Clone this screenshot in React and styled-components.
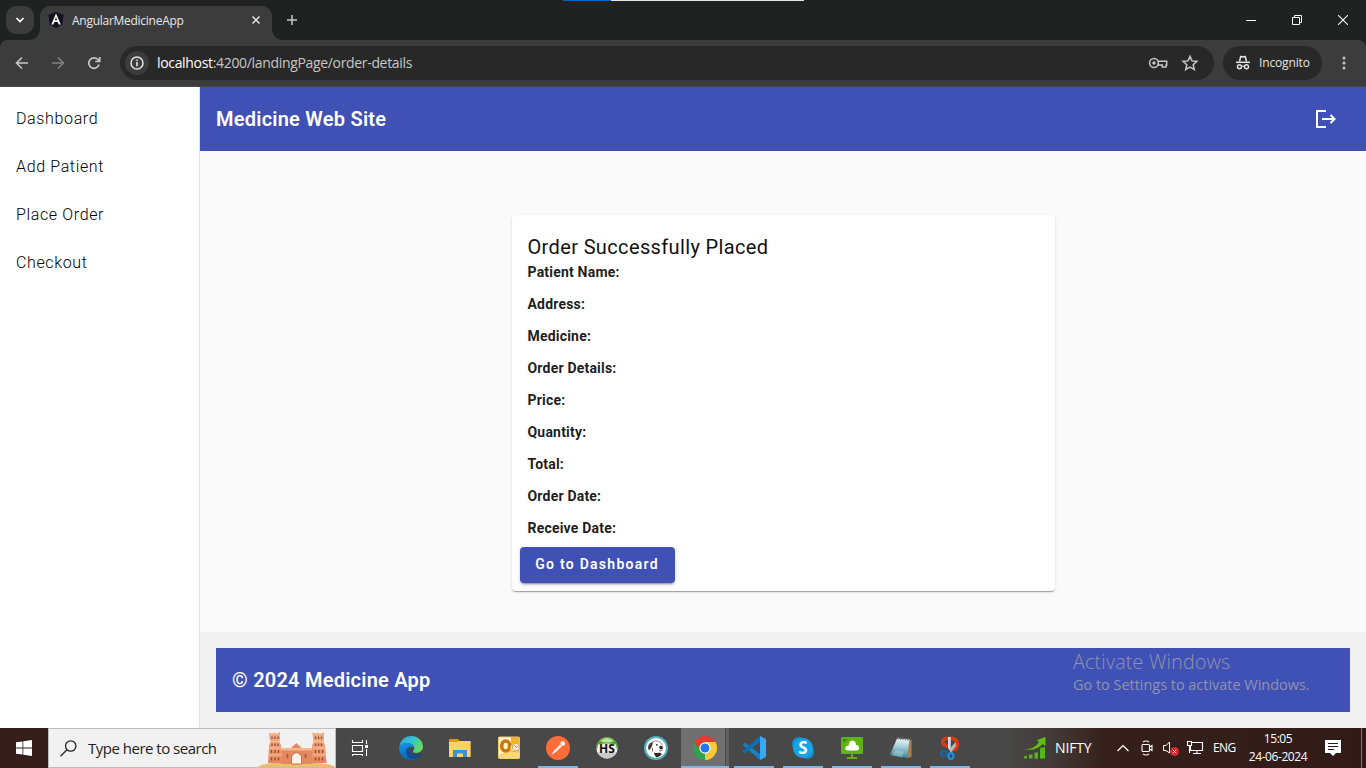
import React from 'react';
import styled, { createGlobalStyle } from 'styled-components';

const Global = createGlobalStyle`
  * { box-sizing: border-box; }
  body { margin: 0; overflow: hidden; background: #fafafa; }
  svg { display: block; flex: none; }
`;

const segoe = `'Open Sans', 'Noto Sans', sans-serif`;

const Screen = styled.div`
  position: relative;
  width: 1366px;
  height: 768px;
  display: flex;
  flex-direction: column;
  overflow: hidden;
  font-family: Roboto, sans-serif;
`;

/* ---------- browser chrome ---------- */
const TabStrip = styled.div`
  height: 40px;
  flex: none;
  display: flex;
  background: #1f2221;
  color: #fff;
  font-family: ${segoe};
`;
const TabSearch = styled.div`
  width: 28px;
  height: 28px;
  margin: 6px 6px 0;
  border-radius: 10px;
  background: #3c3c3c;
  display: flex;
  align-items: center;
  justify-content: center;
`;
const Tab = styled.div`
  position: relative;
  width: 232px;
  height: 34px;
  margin-top: 6px;
  padding: 0 10px 6px 8px;
  border-radius: 10px 10px 0 0;
  background: #3c3c3c;
  display: flex;
  align-items: center;
  &::before, &::after {
    content: '';
    position: absolute;
    bottom: 0;
    width: 10px;
    height: 10px;
  }
  &::before { left: -10px; background: radial-gradient(circle at 0 0, transparent 9.5px, #3c3c3c 10px); }
  &::after { right: -10px; background: radial-gradient(circle at 100% 0, transparent 9.5px, #3c3c3c 10px); }
`;
const TabTitle = styled.span`
  flex: 1;
  margin-left: 8px;
  padding-top: 1px;
  font-size: 12px;
  line-height: 16px;
  letter-spacing: -0.27px;
  color: #e6e6e6;
`;
const NewTab = styled.div`
  width: 40px;
  display: flex;
  align-items: center;
  justify-content: center;
`;
const WindowControls = styled.div`
  margin-left: auto;
  display: flex;
  align-items: center;
`;
const WindowButton = styled.div`
  width: 46px;
  height: 40px;
  display: flex;
  align-items: center;
  justify-content: center;
`;
const LoadingEdge = styled.div`
  position: absolute;
  top: 0;
  left: 563px;
  width: 241px;
  height: 1px;
  background: linear-gradient(90deg, #0067c0 48px, #e4e4e4 48px);
`;
const AddressBar = styled.div`
  height: 47px;
  flex: none;
  display: flex;
  align-items: center;
  padding: 0 10px 1px 10px;
  background: #3c3c3c;
  border-bottom: 1px solid #4a4a4a;
  border-radius: 8px 8px 0 0;
  color: #c7c7c7;
  font-family: ${segoe};
`;
const BarBack = styled.div`
  flex: none;
  background: #1f2221;
`;
const NavButton = styled.div`
  width: 24px;
  margin-right: 12px;
  display: flex;
  justify-content: center;
  opacity: ${(p) => (p.$dim ? 0.5 : 1)};
`;
const Omnibox = styled.div`
  width: 1094px;
  height: 34px;
  margin-left: 2px;
  padding: 0 14px 0 5px;
  border-radius: 17px;
  background: #282828;
  display: flex;
  align-items: center;
`;
const InfoBadge = styled.div`
  width: 24px;
  height: 24px;
  border-radius: 50%;
  background: #3c3c3c;
  display: flex;
  align-items: center;
  justify-content: center;
`;
const Url = styled.span`
  flex: 1;
  margin-left: 8px;
  padding-top: 1px;
  font-size: 14px;
  line-height: 20px;
  letter-spacing: -0.33px;
  color: #c7c7c7;
  b { font-weight: 400; color: #fff; }
`;
const OmniIcons = styled.div`
  display: flex;
  align-items: center;
  gap: 12px;
`;
const Incognito = styled.div`
  width: 99px;
  height: 34px;
  margin-left: 9px;
  padding-left: 12px;
  border-radius: 17px;
  background: #282828;
  display: flex;
  align-items: center;
  gap: 8px;
  font-size: 12px;
  letter-spacing: -0.15px;
  color: #e3e3e3;
`;
const MenuDots = styled.div`
  width: 24px;
  margin-left: 10px;
  display: flex;
  justify-content: center;
`;

/* ---------- page ---------- */
const Page = styled.div`
  flex: 1;
  min-height: 0;
  display: flex;
  background: #fafafa;
`;
const Sidebar = styled.nav`
  width: 200px;
  padding-top: 8px;
  background: #fff;
  border-right: 1px solid #e0e0e0;
`;
const SideLink = styled.div`
  height: 48px;
  padding-left: 16px;
  line-height: 48px;
  font-size: 16px;
  font-weight: 300;
  letter-spacing: 0.64px;
  color: #000;
`;
const Main = styled.main`
  flex: 1;
  display: flex;
  flex-direction: column;
`;
const Toolbar = styled.div`
  height: 64px;
  flex: none;
  padding: 0 28px 0 16px;
  display: flex;
  align-items: center;
  justify-content: space-between;
  background: #3f51b5;
  color: #fff;
  font-size: 20px;
  font-weight: 600;
  letter-spacing: 0.23px;
`;
const Content = styled.section`
  flex: 1;
  padding-top: 64px;
`;
const Card = styled.div`
  width: 543px;
  height: 376px;
  margin-left: 312px;
  border-radius: 4px;
  background: #fff;
  box-shadow: 0 2px 1px -1px rgba(0, 0, 0, 0.2), 0 1px 1px rgba(0, 0, 0, 0.14), 0 1px 3px rgba(0, 0, 0, 0.12);
  color: rgba(0, 0, 0, 0.9);
`;
const CardTitle = styled.h3`
  margin: 0;
  padding: 16px 15.5px 0;
  font-size: 20px;
  line-height: 32px;
  font-weight: 400;
  letter-spacing: 0.36px;
  color: #111;
`;
const Field = styled.p`
  margin: 0 0 12px;
  padding-left: 15.5px;
  font-size: 14px;
  line-height: 20px;
  font-weight: 700;
  letter-spacing: 0.2px;
  &:first-of-type { margin-top: -1px; }
  &:last-of-type { margin-bottom: 9px; }
`;
const PrimaryButton = styled.button`
  display: block;
  width: 155px;
  height: 36px;
  margin-left: 8px;
  padding: 0 1px 2px 0;
  border: 0;
  border-radius: 4px;
  background: #3f51b5;
  color: #fff;
  font: 600 14px Roboto, sans-serif;
  letter-spacing: 1.27px;
  box-shadow: 0 3px 1px -2px rgba(0, 0, 0, 0.2), 0 2px 2px rgba(0, 0, 0, 0.14), 0 1px 5px rgba(0, 0, 0, 0.12);
`;
const Footer = styled.footer`
  height: 96px;
  padding: 16px;
  background: #f0f0f0;
`;
const Watermark = styled.div`
  position: absolute;
  left: 1073px;
  top: 649px;
  font-family: ${segoe};
  color: #8f94ae;
  white-space: nowrap;
`;
const WatermarkTitle = styled.div`
  font-size: 19.5px;
  line-height: 26px;
  font-weight: 300;
  letter-spacing: 0.27px;
`;
const WatermarkText = styled.div`
  font-size: 14.5px;
  line-height: 20px;
  letter-spacing: -0.03px;
`;

/* ---------- taskbar ---------- */
const Taskbar = styled.div`
  height: 40px;
  flex: none;
  display: flex;
  background: linear-gradient(90deg, #351e19 0 48px, #484848 48px, #484848 1000px, #433b39 1050px, #35201b 1105px, #311b17 1366px);
  color: #fff;
  font-family: ${segoe};
`;
const Start = styled.div`
  width: 48px;
  display: flex;
  align-items: center;
  justify-content: center;
`;
const SearchBox = styled.div`
  width: 288px;
  border: 1px solid #bdbdbd;
  background: #f1f1f1;
  padding-left: 11px;
  display: flex;
  align-items: center;
`;
const SearchText = styled.span`
  flex: 1;
  margin-left: 11px;
  font-size: 15px;
  letter-spacing: -0.5px;
  color: #222;
  white-space: nowrap;
`;
const TaskView = styled.div`
  width: 51px;
  padding-right: 3px;
  display: flex;
  align-items: center;
  justify-content: center;
`;
const AppSlot = styled.div`
  position: relative;
  width: 49px;
  padding-right: 1px;
  display: flex;
  align-items: center;
  justify-content: center;
  &::before {
    content: '';
    position: absolute;
    top: 0;
    bottom: 0;
    left: 0;
    width: 48px;
    display: ${(p) => (p.$active ? 'block' : 'none')};
    background: linear-gradient(90deg, #707070 44px, #484848 44px, #484848 45px, #606060 45px);
  }
  &::after {
    content: '';
    position: absolute;
    bottom: 0;
    left: ${(p) => (p.$active ? 0 : 4)}px;
    width: ${(p) => (p.$active ? 48 : 40)}px;
    height: 2px;
    display: ${(p) => (p.$open ? 'block' : 'none')};
    background: #76b9ed;
  }
  svg { position: relative; }
`;
const Tray = styled.div`
  margin-left: auto;
  width: 343px;
  display: flex;
  align-items: center;
`;
const TickerText = styled.span`
  width: 56px;
  margin-left: 8px;
  font-size: 14px;
  line-height: 18px;
  padding-bottom: 1px;
  letter-spacing: -0.15px;
`;
const TrayIcon = styled.div`
  width: 24px;
  display: flex;
  justify-content: center;
`;
const Language = styled.span`
  width: 36px;
  margin-left: 6px;
  padding-bottom: 1px;
  font-size: 12px;
  letter-spacing: -0.55px;
`;
const Clock = styled.div`
  width: 60px;
  margin: 0 17px 0 -1px;
  text-align: center;
  font-size: 12px;
  line-height: 18px;
  letter-spacing: -0.43px;
  white-space: nowrap;
`;
const ShowDesktop = styled.div`
  width: 5px;
  height: 40px;
  margin-left: auto;
  border-left: 1px solid #81736f;
`;

const Svg = ({ w = 24, h = w, vb, children, ...rest }) => (
  <svg width={w} height={h} viewBox={vb || `0 0 ${w} ${h}`} fill="none" {...rest}>{children}</svg>
);

const AngularIcon = () => (
  <Svg w={16} h={16}>
    <path d="M8 0l7.5 2.700-1.100 10L8 16l-6.400-3.300L.5 2.700z" fill="#10131d" />
    <path d="M8 1.500L3.300 12.500h2.100l.9-2.400h3.500l.9 2.400h2.100zm0 4l1.200 2.800H6.800z" fill="#fff" />
  </Svg>
);
const KeyIcon = () => (
  <Svg w={20} h={20} stroke="#c7c7c7" strokeWidth="1.500">
    <path d="M9.500 8.300h9.200v3.600h-.7v2.200h-3.700v-2.200H9.500" />
    <circle cx="6" cy="10" r="4.400" /><circle cx="6" cy="10" r="1.700" fill="#c7c7c7" stroke="none" />
  </Svg>
);
const IncognitoIcon = () => (
  <Svg w={16} h={16}>
    <path d="M4.500 6.500L5.600 2q.2-.7.900-.5L8 2l1.500-.5q.7-.2.900.5l1.100 4.500" stroke="#e3e3e3" strokeWidth="1.500" />
    <path d="M1 7.300h14" stroke="#e3e3e3" strokeWidth="1.500" />
    <circle cx="4.500" cy="11.700" r="2" stroke="#e3e3e3" strokeWidth="1.400" />
    <circle cx="11.500" cy="11.700" r="2" stroke="#e3e3e3" strokeWidth="1.400" />
    <path d="M6.500 11.500q1.500-1 3 0" stroke="#e3e3e3" strokeWidth="1.200" />
  </Svg>
);

const Fort = () => (
  <Svg w={77} h={38}>
    <defs>
      <linearGradient id="stone" x1="0" y1="0" x2="0" y2="38" gradientUnits="userSpaceOnUse">
        <stop stopColor="#f5b181" /><stop offset=".6" stopColor="#ee9a70" /><stop offset="1" stopColor="#df7f59" />
      </linearGradient>
    </defs>
    <path d="M0 38q3-3 14-4h46q14 1 17 4z" fill="#edbd6c" />
    <path d="M23 20h31v15H23z" fill="#e48861" />
    <path d="M23 19h31v2.500H23z" fill="#f6b788" />
    <path d="M33 19l2-2 3.500-3 3 3 2.500 2z" fill="#e58a5e" />
    <path d="M11 3.500l2 1h2.500V3l2 1.500h2l2.500-1.500v7l-.5 3 1.500 3 1 18H10l1-18 1.500-3-1-3z" fill="url(#stone)" />
    <path d="M54.500 3l2.500 1.500h2V3l2 1.500h2.500L66 3v7l-.5 3 1.500 3 1.500 18H54v-18l1.500-3-.5-3z" fill="url(#stone)" />
    <path d="M12 12.500h10M11 19h12.500M11 26h13M55.500 12.500h10M54.500 19h13M54.500 26h13.500" stroke="#fac79c" strokeWidth=".8" />
    <path d="M14 7.500v2.500M17 7.500v2.500M20 7.500v2.500M14 14.500v2.500M17 14.500v2.500M20 14.500v2.500M57.500 7.500v2.500M60.500 7.500v2.500M63.500 7.500v2.500M57.500 14.500v2.500M60.500 14.500v2.500M63.500 14.500v2.500" stroke="#8a4a40" strokeWidth="1.300" />
    <path d="M13.500 21v3M17 21v3M20.500 21v3M13.500 28.500v3M17 28.500v3M20.500 28.500v3M57.500 21v3M61 21v3M64.500 21v3M57.500 28.500v3M61 28.500v3M64.500 28.500v3" stroke="#94483d" strokeWidth="1.400" />
    <path d="M33.500 35v-6q0-4 5-5.500 5 1.500 5 5.500v6z" fill="#fff3e2" stroke="#c77352" />
    <path d="M29.500 25v4M47.500 25v4" stroke="#a9553f" strokeWidth="1.600" />
  </Svg>
);
const TaskViewIcon = () => (
  <Svg w={18} h={18} stroke="#fff">
    <path d="M1.500 1v3M11.500 1v3M1 3.500h11M1.500 6.500h10v6h-10zM1 15.500h11M1.500 15v2M11.500 15v2M15.500 1v4M15.500 10v7" strokeWidth="1.100" />
    <path d="M14 6h3v3h-3z" fill="#fff" stroke="none" />
  </Svg>
);
const EdgeIcon = () => (
  <Svg w={24} h={24}>
    <defs>
      <linearGradient id="eg" x1="0" y1="0" x2="24" y2="12" gradientUnits="userSpaceOnUse">
        <stop stopColor="#2aa5e0" /><stop offset=".5" stopColor="#35c1d0" /><stop offset="1" stopColor="#6be04a" />
      </linearGradient>
      <linearGradient id="eb" x1="0" y1="6" x2="6" y2="24" gradientUnits="userSpaceOnUse">
        <stop stopColor="#1a9be0" /><stop offset="1" stopColor="#0a62b8" />
      </linearGradient>
    </defs>
    <path d="M.3 11C1 4.500 6 0 12.200 0 19 0 24 5 24 10.600c0 3.900-3 6.300-6.300 6.300-2.800 0-4.200-1-3.600-2 1-1.200 1.200-2 1-3.300C14.600 8.700 12 7 9 7 5 7 1.500 8.400.3 11z" fill="url(#eg)" />
    <path d="M.3 11C1.500 8.500 5 7 8.500 7c3.700 0 6.700 2 6.600 5-1.300-2.300-5.800-1.600-6.600 2-.9 4.500 3.300 9.800 9 8.500-1.700 1-3.600 1.500-5.500 1.500C5 24-.6 18 .3 11z" fill="url(#eb)" />
    <path d="M9.500 11.500c-2.500 1.200-3 4.500-1.500 7.400 1.700 3.300 5.800 5.300 9.700 3.600 2-.9 4-2.800 4.800-4.500.1-.5-.3-.6-.8-.3-5.500 2.500-12.800.300-12.200-6.200z" fill="#0e4b91" />
  </Svg>
);
const ExplorerIcon = () => (
  <Svg w={24} h={24}>
    <path d="M1 3h9l1.500 2H22.500V21H1z" fill="#dd9b10" />
    <path d="M1 6h8l2-1h11.500v16H1z" fill="#fcd462" />
    <path d="M5 21V14h14v7h-4v-3.500H9V21z" fill="#3a91d8" />
  </Svg>
);
const Letters = styled.text`
  font: 700 ${(p) => p.$size}px 'Open Sans', sans-serif;
  text-anchor: middle;
`;
const OutlookIcon = () => (
  <Svg w={24} h={24}>
    <rect x="1.500" y="1" width="21" height="21.500" rx="1" fill="#fdf3d6" stroke="#f5cf62" />
    <path d="M14 1h8.500v8H14z" fill="#efb32c" /><path d="M2 19q9-6 20.500-3v6.500H2z" fill="#f9d676" />
    <ellipse cx="8.700" cy="10" rx="4" ry="5" stroke="#cf7608" strokeWidth="3.600" />
    <path d="M13.500 10l8-2v8l-8-1z" fill="#fbe4a2" stroke="#dba233" strokeWidth=".7" />
    <circle cx="19" cy="11" r="3.700" fill="#fff4e4" stroke="#e09443" strokeWidth=".8" /><path d="M17.500 9.500l2 2 2-1.500" stroke="#c37717" />
  </Svg>
);
const PostmanIcon = () => (
  <Svg w={24} h={24}>
    <circle cx="12" cy="12" r="12" fill="#ff6c37" />
    <path d="M5.500 18.500l2.500-4 6-6 1.800 2-6 5.500z" fill="#fff" /><path d="M8.500 15l5.500-5.500" stroke="#ff9c78" strokeWidth=".7" />
    <circle cx="16.700" cy="7.500" r="2.300" fill="#fff" />
  </Svg>
);
const HsIcon = () => (
  <Svg w={24} h={24}>
    <circle cx="12" cy="12" r="10.700" fill="#c9cbc8" /><path d="M1.300 12a10.700 10.700 0 0 1 21.400 0q-10 2-21.400 0z" fill="#4fa524" />
    <path d="M5 5q7-6 14 0-7 3-14 0z" fill="#b9e59a" /><path d="M3 8.500q9-2 18 0l1 7.500q-10 2-20 0z" fill="#eef3ea" />
    <Letters $size={12} x="12" y="16.500" fill="#111">HS</Letters>
  </Svg>
);
const BeaverIcon = () => (
  <Svg w={24} h={24}>
    <circle cx="12" cy="12" r="11" fill="#fff" stroke="#4fb3bf" strokeWidth="2" />
    <path d="M4 12q0-4 3-5.500l2-.5q-.5 3-1.700 5.500L5 14.500z" fill="#4a3832" />
    <path d="M8 6q3-2 7-.5 3 1.500 3.500 4" stroke="#8f817b" strokeWidth=".9" />
    <path d="M15.500 10q1.800-.6 3.200.6v2.300l-1.900.5-1.500-1.200z" fill="#33221d" />
    <path d="M15 14.500q2 1 3.500-.5M8.500 12v3.500" stroke="#6b5a54" strokeWidth=".9" />
    <path d="M10 16.500q3 1 5.500 0l2.500 1.500q-2 3-5.500 3.400-2.500-1.800-2.500-4.900z" fill="#33221d" />
    <circle cx="12.800" cy="8.800" r=".9" fill="#33221d" />
  </Svg>
);
const ChromeIcon = () => (
  <Svg w={24} h={24}>
    <path d="M12 12L1.600 6A12 12 0 0 1 22.400 6z" fill="#e33b2e" />
    <path d="M12 12V6h10.400A12 12 0 0 1 12 24z" fill="#fcc934" />
    <path d="M1.600 6A12 12 0 0 0 12 24l5.200-9L12 12z" fill="#30a150" />
    <path d="M1.600 6l5.200 9L12 12V6z" fill="#30a150" /><path d="M1.600 6h20.800H12l-5.200 3-1.500 3.500z" fill="#e33b2e" />
    <path d="M12 24l5.200-9L12 12z" fill="#fcc934" />
    <circle cx="12" cy="12" r="5.700" fill="#fff" /><circle cx="12" cy="12" r="4.500" fill="#2477e8" />
  </Svg>
);
const CodeIcon = () => (
  <Svg w={24} h={24}>
    <path d="M2.500 6.500L18 18v6L.5 8.500z" fill="#1583cb" />
    <path d="M2.500 17.500L.5 15.500 18 0v6z" fill="#0d70b5" />
    <path d="M18 0l6 3v18l-6 3z" fill="#37a8f2" />
  </Svg>
);
const SkypeIcon = () => (
  <Svg w={24} h={24}>
    <circle cx="8" cy="8" r="7" fill="#1191d5" /><circle cx="16" cy="16" r="7" fill="#148ed0" /><circle cx="12" cy="12" r="10" fill="#15a5e5" />
    <Letters $size={17} x="12" y="18" fill="#fff">S</Letters>
  </Svg>
);
const CloudPcIcon = () => (
  <Svg w={24} h={24}>
    <rect x="1" y="1" width="22" height="17" rx="1" fill="#5eb510" />
    <path d="M11 18h2v3h4v2H7v-2h4z" fill="#66a92b" /><path d="M3 3h5L3 7z" fill="#3f8b13" />
    <path d="M7 14.500q-3-1-1-4 1-1 2.500-.8Q9 5 12.500 4.500 16 5 16 9q3 0 3 3t-3 2.500z" fill="#fff" />
  </Svg>
);
const NotepadIcon = () => (
  <Svg w={24} h={24}>
    <defs>
      <linearGradient id="np" x1="10" y1="2" x2="8" y2="22" gradientUnits="userSpaceOnUse">
        <stop stopColor="#edf5f5" /><stop offset=".4" stopColor="#a9d1da" /><stop offset="1" stopColor="#287f94" />
      </linearGradient>
    </defs>
    <path d="M19 3l3.500 1v17L18 22z" fill="#a9834f" />
    <path d="M8 2.500L20.500 3.500 18 22 1 18.500z" fill="url(#np)" />
    <path d="M7 14l8 1.500-2 6-10-2z" fill="#d5eef2" opacity=".35" />
    <path d="M9 1v2.500m2.500-2V4m2.500-2.500V4m2.500-2v2.500m2.500-2v2.500" stroke="#777d7e" />
  </Svg>
);
const SnipIcon = () => (
  <Svg w={24} h={24}>
    <path d="M10 2.500Q4.500 2 4.500 5.500 5 9 10 10.500M11 2q8.500 0 8.500 6.500-.5 5-5.500 5.500" stroke="#d83c12" strokeWidth="3.500" />
    <path d="M10 1h2.800v15L10 12z" fill="#d6d9db" /><path d="M17.500 6l.5 4-5.500 7-1-4z" fill="#b5babd" />
    <ellipse cx="6" cy="17.500" rx="3" ry="2.300" stroke="#1266b3" strokeWidth="2" /><ellipse cx="13" cy="20" rx="2.500" ry="3" stroke="#1994e2" strokeWidth="2" />
  </Svg>
);
const TickerIcon = () => (
  <Svg w={24} h={24}>
    <path d="M1 22.500v-2l3-1v3zM6 22.500v-4h3.500v4zM11.500 22.500v-6H15v6zM17 22.500V12l5-1v11.500z" fill="#52b717" />
    <path d="M1 13q10 1 15-7l-2-2 8.500-3v9l-3-2Q12 16 1 13z" fill="#5fc010" />
  </Svg>
);

const fields = ['Patient Name:', 'Address:', 'Medicine:', 'Order Details:', 'Price:', 'Quantity:', 'Total:', 'Order Date:', 'Receive Date:'];
const apps = [
  [EdgeIcon], [ExplorerIcon], [OutlookIcon], [PostmanIcon, true], [HsIcon], [BeaverIcon],
  [ChromeIcon, true, true], [CodeIcon, true], [SkypeIcon, true], [CloudPcIcon, true], [NotepadIcon, true], [SnipIcon, true],
];

export default function App() {
  return (
    <Screen>
      <Global />
      <TabStrip>
        <TabSearch><Svg w={10} h={10} stroke="#fff" strokeWidth="1.700"><path d="M1.500 3L5 6.500 8.500 3" /></Svg></TabSearch>
        <Tab>
          <AngularIcon />
          <TabTitle>AngularMedicineApp</TabTitle>
          <Svg w={12} h={12} stroke="#e3e3e3" strokeWidth="1.500"><path d="M2.500 2.500l7 7M9.500 2.500l-7 7" /></Svg>
        </Tab>
        <NewTab><Svg w={12} h={12} stroke="#c7c7c7" strokeWidth="1.500"><path d="M6 1v10M1 6h10" /></Svg></NewTab>
        <WindowControls>
          <WindowButton><Svg w={10} h={10} stroke="#fff"><path d="M0 5.500h10" /></Svg></WindowButton>
          <WindowButton><Svg w={10} h={10} stroke="#fff"><path d="M.5 2.500h7v7h-7zM2.500 2.500v-2h7v7h-2" /></Svg></WindowButton>
          <WindowButton><Svg w={10} h={10} stroke="#fff" strokeWidth="1.100"><path d="M0 0l10 10M10 0L0 10" /></Svg></WindowButton>
        </WindowControls>
        <LoadingEdge />
      </TabStrip>
      <BarBack>
        <AddressBar>
          <NavButton><Svg w={14} h={14} stroke="#c7c7c7" strokeWidth="1.600"><path d="M13 7H2M7 1.500L1.500 7 7 12.500" /></Svg></NavButton>
          <NavButton $dim><Svg w={14} h={14} stroke="#c7c7c7" strokeWidth="1.600"><path d="M1 7h11M7 1.500L12.500 7 7 12.500" /></Svg></NavButton>
          <NavButton><Svg w={14} h={14} stroke="#c7c7c7" strokeWidth="1.700"><path d="M12 8.500a5.200 5.200 0 1 1-1.200-5L12.500 5M12.700 1v4.500H8.200" /></Svg></NavButton>
          <Omnibox>
            <InfoBadge><Svg w={14} h={14} stroke="#e3e3e3" strokeWidth="1.500"><circle cx="7" cy="7" r="6" /><path d="M7 6v4.300M7 3.500v1.500" strokeWidth="1.600" /></Svg></InfoBadge>
            <Url><b>localhost</b>:4200/landingPage/order-details</Url>
            <OmniIcons>
              <KeyIcon />
              <Svg w={20} h={20} stroke="#c7c7c7" strokeWidth="1.500"><path d="M10 3.400l2 4.500 4.900.5-3.700 3.300 1.100 4.800-4.300-2.500-4.300 2.500 1.100-4.800-3.700-3.300 4.900-.5z" /></Svg>
            </OmniIcons>
          </Omnibox>
          <Incognito><IncognitoIcon />Incognito</Incognito>
          <MenuDots><Svg w={4} h={14}><g fill="#c7c7c7"><circle cx="2" cy="2" r="1.500" /><circle cx="2" cy="7" r="1.500" /><circle cx="2" cy="12" r="1.500" /></g></Svg></MenuDots>
        </AddressBar>
      </BarBack>

      <Page>
        <Sidebar>
          {['Dashboard', 'Add Patient', 'Place Order', 'Checkout'].map((t) => <SideLink key={t}>{t}</SideLink>)}
        </Sidebar>
        <Main>
          <Toolbar>
            <span>Medicine Web Site</span>
            <Svg w={24} h={24} stroke="#fff" strokeWidth="2"><path d="M12 4H3v16h9M8 12h13M16.500 8l4 4-4 4" /></Svg>
          </Toolbar>
          <Content>
            <Card>
              <CardTitle>Order Successfully Placed</CardTitle>
              {fields.map((f) => <Field key={f}>{f}</Field>)}
              <PrimaryButton>Go to Dashboard</PrimaryButton>
            </Card>
          </Content>
          <Footer><Toolbar>© 2024 Medicine App</Toolbar></Footer>
        </Main>
      </Page>

      <Watermark>
        <WatermarkTitle>Activate Windows</WatermarkTitle>
        <WatermarkText>Go to Settings to activate Windows.</WatermarkText>
      </Watermark>

      <Taskbar>
        <Start><Svg w={16} h={16}><path d="M0 2.300L6.500 1.400V7.600H0zM7.300 1.300L16 0v7.600H7.300zM0 8.400h6.500v6.200L0 13.700zM7.300 8.400H16V16l-8.700-1.300z" fill="#fff" /></Svg></Start>
        <SearchBox>
          <Svg w={17} h={17} stroke="#222" strokeWidth="1.300"><circle cx="10.700" cy="6" r="5.200" /><path d="M7 9.700L.5 16.200" /></Svg>
          <SearchText>Type here to search</SearchText>
          <Fort />
        </SearchBox>
        <TaskView><TaskViewIcon /></TaskView>
        {apps.map(([Icon, open, active], i) => (
          <AppSlot key={i} $open={open} $active={active}><Icon /></AppSlot>
        ))}
        <Tray>
          <TickerIcon />
          <TickerText>NIFTY</TickerText>
          <TrayIcon><Svg w={12} h={8} stroke="#fff" strokeWidth="1.200"><path d="M.5 7L6 1.500 11.500 7" /></Svg></TrayIcon>
          <TrayIcon><Svg w={14} h={16} stroke="#fff" strokeWidth="1.100"><rect x="2" y="4.500" width="7.500" height="7" rx="1" /><path d="M9.500 7l2.500-1.500v5L9.500 9M3 2q3-2 6 0M3 14q3 2 6 0" /></Svg></TrayIcon>
          <TrayIcon><Svg w={18} h={16} stroke="#fff"><path d="M1.500 5.500H4L7.500 2v11L4 10.500H1.500z" /><circle cx="12.500" cy="11.500" r="4.500" fill="#d9262e" stroke="none" /><path d="M10.800 9.800l3.400 3.400M14.200 9.800l-3.400 3.400" /></Svg></TrayIcon>
          <TrayIcon><Svg w={18} h={16} stroke="#fff" strokeWidth="1.100"><path d="M5.500 2.500h11v8H4.500V6M11 10.500v3M7 13.500h8M1.500 1.500h4v4h-4zM3.500 5.500V13" /></Svg></TrayIcon>
          <Language>ENG</Language>
          <Clock>15:05<br />24-06-2024</Clock>
          <Svg w={16} h={16}><path d="M0 0h16v13h-5l-3 3-3-3H0z" fill="#fff" /><path d="M3 3.500h10M3 6.500h10M3 9.500h6" stroke="#311b17" /></Svg>
          <ShowDesktop />
        </Tray>
      </Taskbar>
    </Screen>
  );
}
